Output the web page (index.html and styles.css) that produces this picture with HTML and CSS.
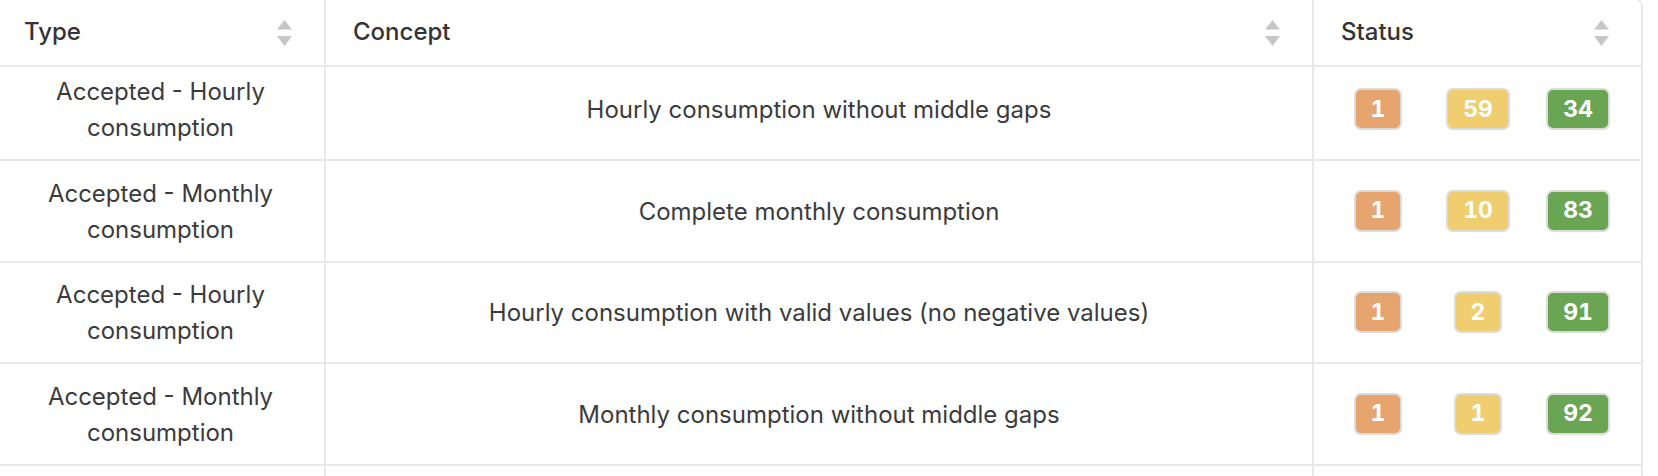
FILE: index.html
```html
<!DOCTYPE html>
<html lang="en">
<head>
<meta charset="utf-8">
<title>Quality table</title>
<link rel="stylesheet" href="styles.css">
</head>
<body>
<div class="table">
  <div class="row head">
    <div class="cell th"><span>Type</span><svg class="sort" viewBox="0 0 15 26" width="15" height="26"><path d="M0 9.5 L7.5 0 L15 9.5 Z M0 16 L15 16 L7.5 26 Z"/></svg></div>
    <div class="cell th"><span>Concept</span><svg class="sort" viewBox="0 0 15 26" width="15" height="26"><path d="M0 9.5 L7.5 0 L15 9.5 Z M0 16 L15 16 L7.5 26 Z"/></svg></div>
    <div class="cell th"><span>Status</span><svg class="sort" viewBox="0 0 15 26" width="15" height="26"><path d="M0 9.5 L7.5 0 L15 9.5 Z M0 16 L15 16 L7.5 26 Z"/></svg></div>
  </div>
  <div class="row first">
    <div class="cell type">Accepted - Hourly<br>consumption</div>
    <div class="cell concept">Hourly consumption without middle gaps</div>
    <div class="cell status"><span class="badge orange">1</span><span class="badge yellow">59</span><span class="badge green">34</span></div>
  </div>
  <div class="row">
    <div class="cell type">Accepted - Monthly<br>consumption</div>
    <div class="cell concept">Complete monthly consumption</div>
    <div class="cell status"><span class="badge orange">1</span><span class="badge yellow">10</span><span class="badge green">83</span></div>
  </div>
  <div class="row">
    <div class="cell type">Accepted - Hourly<br>consumption</div>
    <div class="cell concept">Hourly consumption with valid values (no negative values)</div>
    <div class="cell status"><span class="badge orange">1</span><span class="badge yellow">2</span><span class="badge green">91</span></div>
  </div>
  <div class="row">
    <div class="cell type">Accepted - Monthly<br>consumption</div>
    <div class="cell concept">Monthly consumption without middle gaps</div>
    <div class="cell status"><span class="badge orange">1</span><span class="badge yellow">1</span><span class="badge green">92</span></div>
  </div>
  <div class="row">
    <div class="cell type"></div>
    <div class="cell concept"></div>
    <div class="cell status"></div>
  </div>
</div>
</body>
</html>
```

FILE: styles.css
```css
* { box-sizing: border-box; }
html, body { margin: 0; padding: 0; background: #fff; overflow: hidden; }
body {
  font-family: Inter, "Noto Sans", "Liberation Sans", sans-serif;
  color: #3b3b3d;
  width: 1658px;
  height: 476px;
}
.table {
  width: 1648px;
  margin: -3px 0 0 -5px;
  border: 2px solid #e8e8e8;
  border-radius: 10px;
  overflow: hidden;
  background: #fff;
}
.row {
  display: grid;
  grid-template-columns: 329px 988px 327px;
  height: 101.5px;
  border-bottom: 2px solid #e8e8e8;
}
.row.head {
  height: 68px;
  position: relative;
  z-index: 1;
  background: #fff;
}
.row.first { margin-top: -7.5px; }
.cell {
  border-right: 2px solid #e8e8e8;
  display: flex;
  align-items: center;
  font-size: 24px;
  line-height: 36px;
}
.cell:last-child { border-right: none; }
.th {
  justify-content: space-between;
  padding: 0 32px 1px 27px;
  font-weight: 500;
  color: #333335;
}
.sort { fill: #c6c6c8; display: block; margin-top: 2px; }
.type, .concept {
  justify-content: center;
  text-align: center;
  padding-top: 2px;
}
.status {
  display: grid;
  grid-template-columns: repeat(3, 100px);
  justify-items: center;
  align-items: center;
  padding: 0 13px 0 14px;
}
.badge {
  height: 42px;
  padding: 0 15px;
  border: 2px solid #dcdcdc;
  border-radius: 7px;
  display: flex;
  align-items: center;
  justify-content: center;
  color: #fff;
  font-weight: 700;
  font-size: 23px;
  line-height: 1;
  font-variant-numeric: tabular-nums;
}
.orange { background: #e6a46f; }
.yellow { background: #f0ce6f; }
.green { background: #69a553; }
```
